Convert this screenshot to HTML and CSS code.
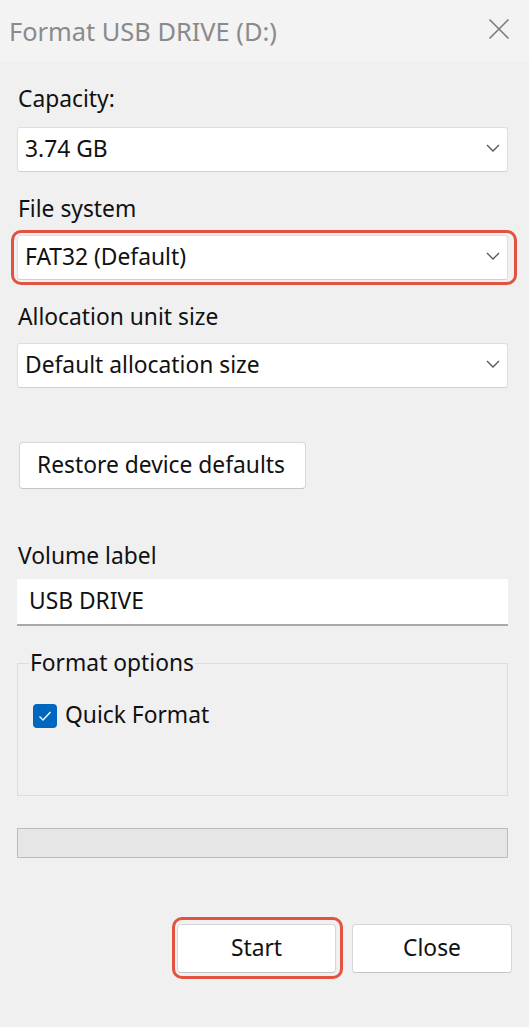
FILE: index.html
```html
<!DOCTYPE html>
<html lang="en">
<head>
<meta charset="utf-8">
<title>Format USB DRIVE (D:)</title>
<link rel="stylesheet" href="styles.css">
</head>
<body>
<div class="window">
  <header class="titlebar">
    <span class="title">Format USB DRIVE (D:)</span>
    <svg class="close" width="22" height="22" viewBox="0 0 22 22" aria-label="Close">
      <path d="M1.5 1.5 L20.5 20.5 M20.5 1.5 L1.5 20.5" stroke="#7a7a7a" stroke-width="1.6" fill="none"/>
    </svg>
  </header>

  <main class="content">
    <label class="label first">Capacity:</label>
    <div class="select">
      <span>3.74 GB</span>
      <svg class="chev" width="14" height="8" viewBox="0 0 14 8"><path d="M1 1 L7 7 L13 1" stroke="#555" stroke-width="1.3" fill="none"/></svg>
    </div>

    <label class="label">File system</label>
    <div class="highlight hl-select">
      <div class="select">
        <span>FAT32 (Default)</span>
        <svg class="chev" width="14" height="8" viewBox="0 0 14 8"><path d="M1 1 L7 7 L13 1" stroke="#555" stroke-width="1.3" fill="none"/></svg>
      </div>
    </div>

    <label class="label">Allocation unit size</label>
    <div class="select">
      <span>Default allocation size</span>
      <svg class="chev" width="14" height="8" viewBox="0 0 14 8"><path d="M1 1 L7 7 L13 1" stroke="#555" stroke-width="1.3" fill="none"/></svg>
    </div>

    <div class="restore-row">
      <button class="btn restore">Restore device defaults</button>
    </div>

    <label class="label vol">Volume label</label>
    <div class="input">USB DRIVE</div>

    <fieldset class="group">
      <legend>Format options</legend>
      <div class="check-row">
        <span class="checkbox">
          <svg width="14" height="12" viewBox="0 0 14 12"><path d="M1.5 6.5 L5 10 L12.5 2" stroke="#fff" stroke-width="1.3" fill="none"/></svg>
        </span>
        <span>Quick Format</span>
      </div>
    </fieldset>

    <div class="progress"></div>

    <div class="actions">
      <div class="highlight hl-start">
        <button class="btn action">Start</button>
      </div>
      <button class="btn action">Close</button>
    </div>
  </main>
</div>
</body>
</html>
```

FILE: styles.css
```css
html, body {
  margin: 0;
  padding: 0;
}

body {
  background: #f0f0f0;
  font-family: "Noto Sans", "Open Sans", sans-serif;
  font-size: 22.8px;
  color: #111;
}

.window {
  width: 529px;
  height: 1027px;
  overflow: hidden;
}

.titlebar {
  height: 62px;
  background: #f3f3f3;
  display: flex;
  align-items: center;
  justify-content: space-between;
  padding: 0 19px 0 9px;
  box-sizing: border-box;
}

.title {
  color: #8a8a8a;
  font-size: 25.4px;
  margin-top: -1px;
}

.close {
  display: block;
  margin-top: -5px;
}

.content {
  padding: 22px 21px 0 17px;
  display: flex;
  flex-direction: column;
}

.label {
  display: block;
  line-height: 30px;
  height: 30px;
  padding-left: 1px;
  margin-top: 22px;
  margin-bottom: 11px;
}

.label.first {
  margin-top: 0;
  margin-bottom: 13px;
}

.select {
  height: 45px;
  box-sizing: border-box;
  background: #fff;
  border: 1px solid #dedede;
  border-bottom-color: #d0d0d0;
  border-radius: 3px;
  display: flex;
  align-items: center;
  justify-content: space-between;
  padding: 0 7px 0 7px;
}

.select span {
  margin-top: -2px;
}

.chev {
  display: block;
  margin-top: -4px;
}

.highlight {
  border: 3px solid #e2533f;
  border-radius: 10px;
}

.hl-select {
  margin: -5px -9px -5px -6px;
  padding: 2px 6px 2px 3px;
}

.restore-row {
  display: flex;
  margin-top: 54px;
}

.btn {
  font-family: inherit;
  font-size: inherit;
  color: #111;
  background: #fff;
  border: 1px solid #d6d6d6;
  border-bottom-color: #c4c4c4;
  border-radius: 4px;
  box-sizing: border-box;
  cursor: default;
}

.restore {
  height: 47px;
  padding: 0 20px 3px 17px;
  margin-left: 2px;
}

.label.vol {
  margin-top: 52px;
  margin-bottom: 8px;
}

.input {
  height: 47px;
  box-sizing: border-box;
  background: #fff;
  border-bottom: 2px solid #a9a9a9;
  padding: 0 12px 3px 12px;
  display: flex;
  align-items: center;
}

.group {
  margin: 22px 0 0 0;
  padding: 0 11px 0 11px;
  border: 1px solid #dcdcdc;
  height: 148px;
  box-sizing: border-box;
  min-width: 0;
}

.group legend {
  padding: 0 1px;
  line-height: 30px;
}

.check-row {
  display: flex;
  align-items: center;
  gap: 8px;
  margin-top: 24px;
  margin-left: 4px;
}

.checkbox {
  width: 24px;
  height: 24px;
  border-radius: 4px;
  background: #0067c0;
  display: flex;
  align-items: center;
  justify-content: center;
}

.checkbox svg {
  display: block;
}

.check-row span:last-child {
  margin-top: -3px;
}

.progress {
  margin-top: 32px;
  height: 30px;
  box-sizing: border-box;
  background: #e6e6e6;
  border: 1px solid #bcbcbc;
}

.actions {
  margin-top: 66px;
  margin-right: -4px;
  display: flex;
  justify-content: flex-end;
  align-items: flex-start;
  gap: 16px;
}

.hl-start {
  margin: -7px -7px -6px -5px;
  padding: 4px 4px 3px 2px;
  display: flex;
}

.action {
  width: 160px;
  height: 49px;
  padding: 0 0 3px 0;
}

.hl-start .action {
  width: 159px;
}
```
